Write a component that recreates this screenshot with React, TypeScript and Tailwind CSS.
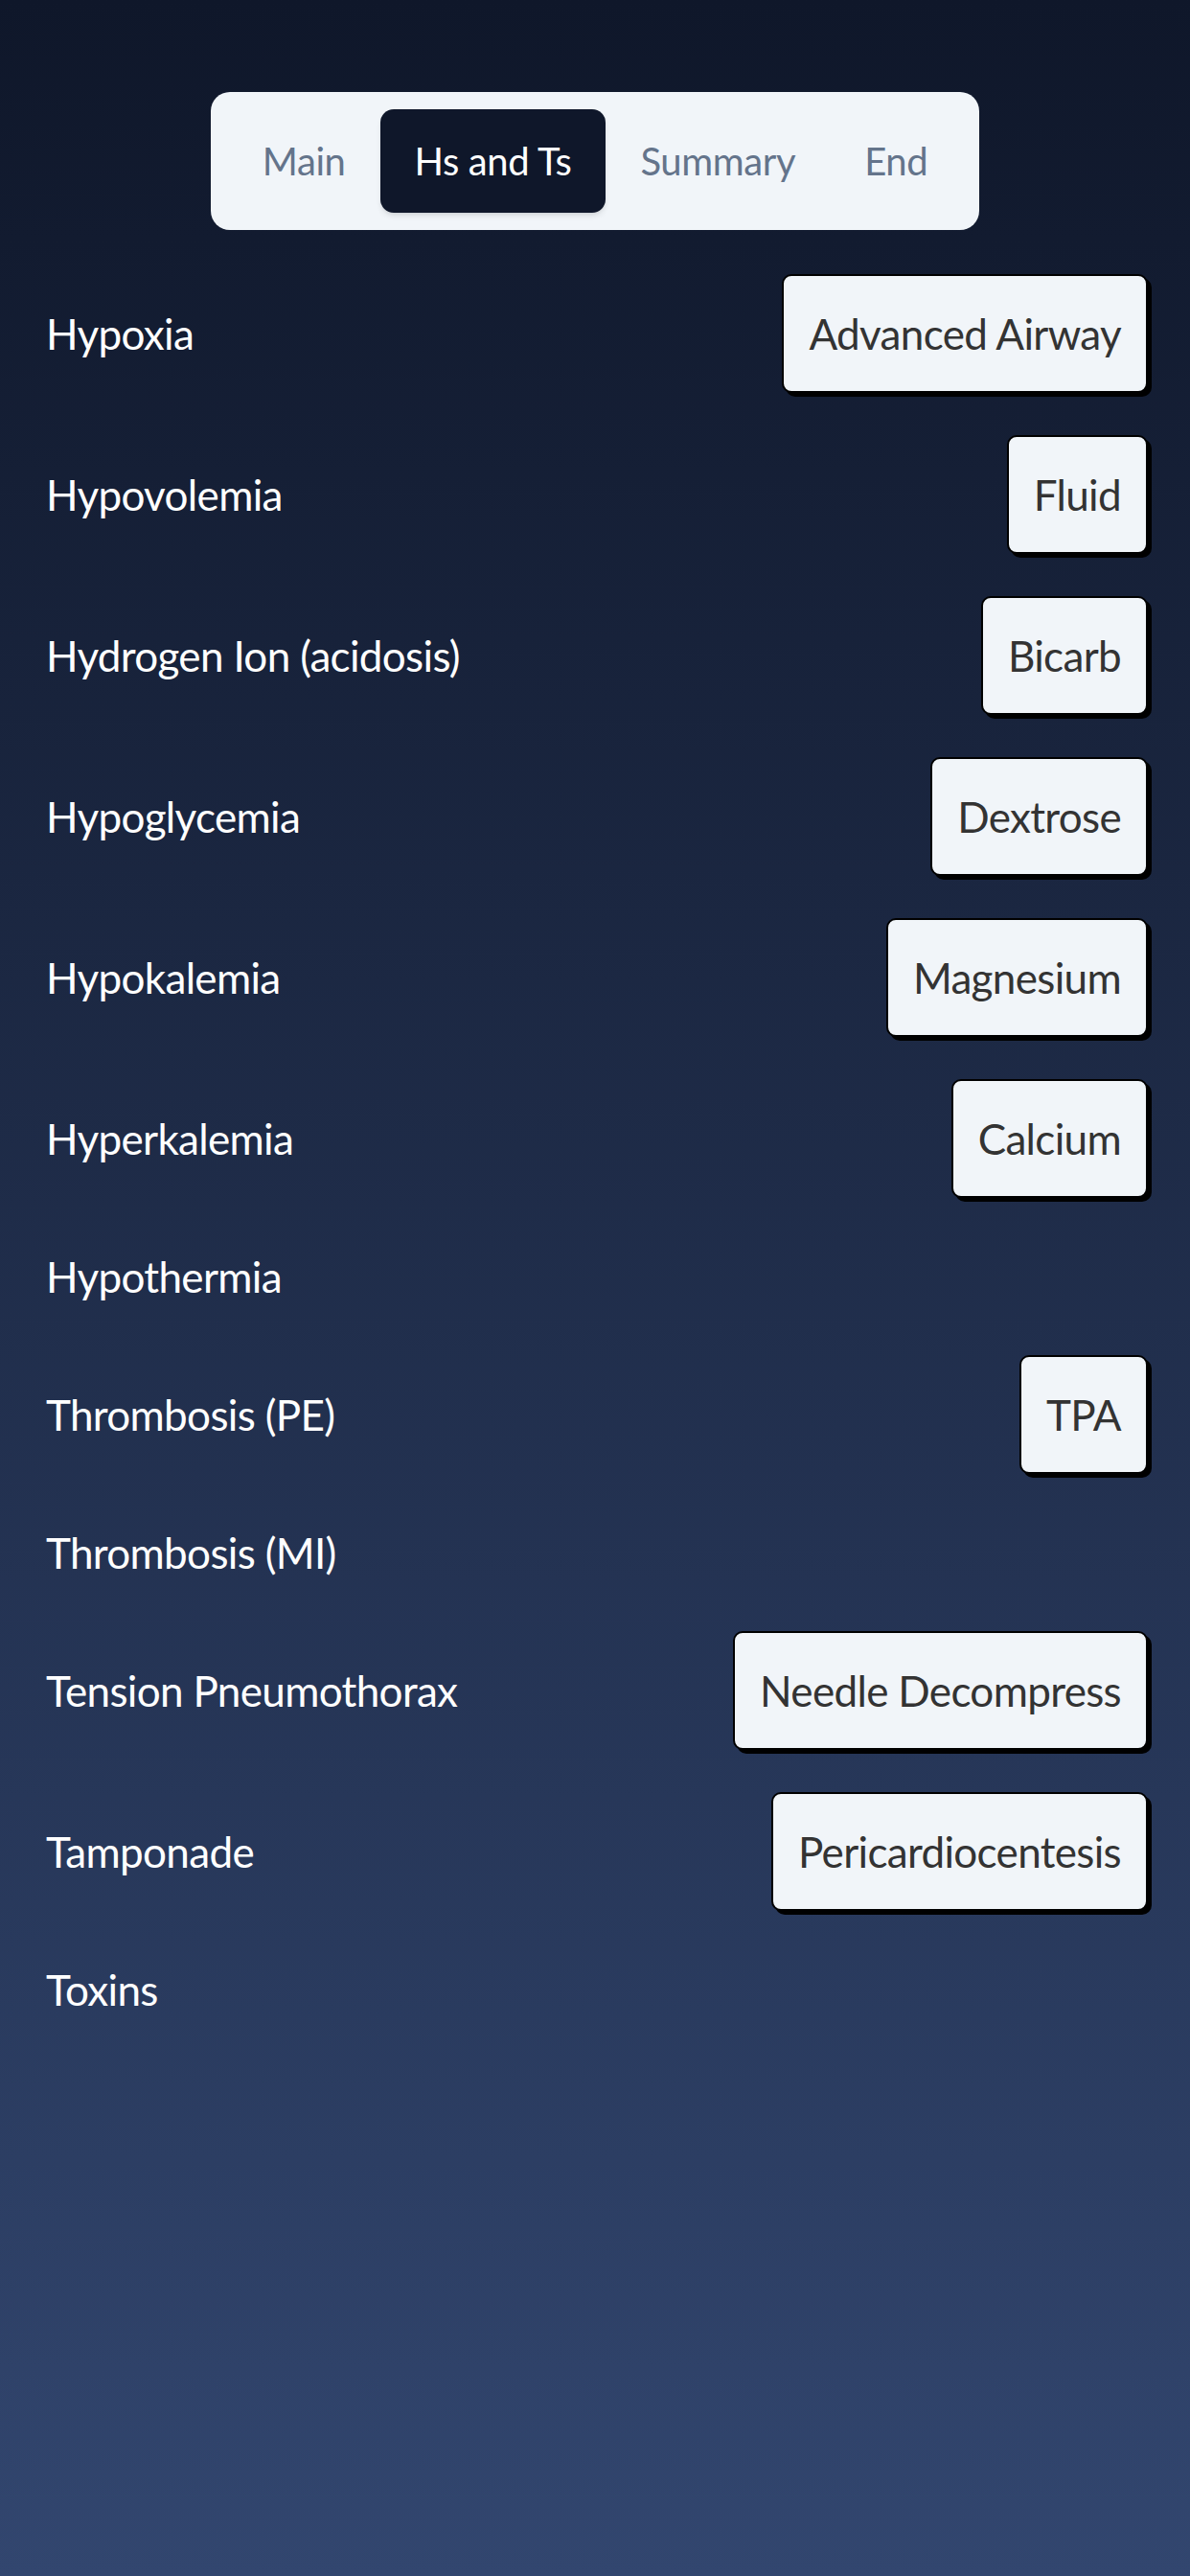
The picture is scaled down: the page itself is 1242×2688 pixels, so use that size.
import React from 'react';

interface CauseRow {
    label: string;
    action?: string;
}

const tabs = ['Main', 'Hs and Ts', 'Summary', 'End'];
const activeTab = 'Hs and Ts';

const causes: CauseRow[] = [
    { label: 'Hypoxia', action: 'Advanced Airway' },
    { label: 'Hypovolemia', action: 'Fluid' },
    { label: 'Hydrogen Ion (acidosis)', action: 'Bicarb' },
    { label: 'Hypoglycemia', action: 'Dextrose' },
    { label: 'Hypokalemia', action: 'Magnesium' },
    { label: 'Hyperkalemia', action: 'Calcium' },
    { label: 'Hypothermia' },
    { label: 'Thrombosis (PE)', action: 'TPA' },
    { label: 'Thrombosis (MI)' },
    { label: 'Tension Pneumothorax', action: 'Needle Decompress' },
    { label: 'Tamponade', action: 'Pericardiocentesis' },
    { label: 'Toxins' },
];

export default function App() {
    return (
        <div
            className="min-h-[2688px] w-full bg-gradient-to-b from-[#0f172a] to-[#32466f] pt-[96px]"
            style={{ fontFamily: 'Lato, "Noto Sans", sans-serif' }}
        >
            {/* Tabs */}
            <div className="mx-auto flex w-fit items-center rounded-[20px] bg-[#f1f5f9] p-[18px]">
                {tabs.map((tab) => {
                    const active = tab === activeTab;
                    return (
                        <button
                            key={tab}
                            className={
                                active
                                    ? 'flex h-[108px] items-center rounded-[14px] bg-[#0f172a] px-9 text-[40px] tracking-[-0.01em] text-white shadow-md'
                                    : 'flex h-[108px] items-center rounded-[14px] px-9 text-[40px] tracking-[-0.01em] text-[#64748b]'
                            }
                        >
                            {tab}
                        </button>
                    );
                })}
            </div>

            {/* Hs and Ts list */}
            <div className="mt-6 flex flex-col pl-12 pr-[44px]">
                {causes.map((row) => (
                    <div key={row.label} className="flex min-h-[120px] items-center justify-between py-[22px]">
                        <span className="text-[44px] tracking-[-0.015em] text-white">{row.label}</span>
                        {row.action && (
                            <button className="flex h-[124px] items-center rounded-[10px] border-2 border-black bg-[#f1f5f9] px-[26px] text-[44px] tracking-[-0.015em] text-[#333333] shadow-[4px_4px_0_0_#000]">
                                {row.action}
                            </button>
                        )}
                    </div>
                ))}
            </div>
        </div>
    );
}
